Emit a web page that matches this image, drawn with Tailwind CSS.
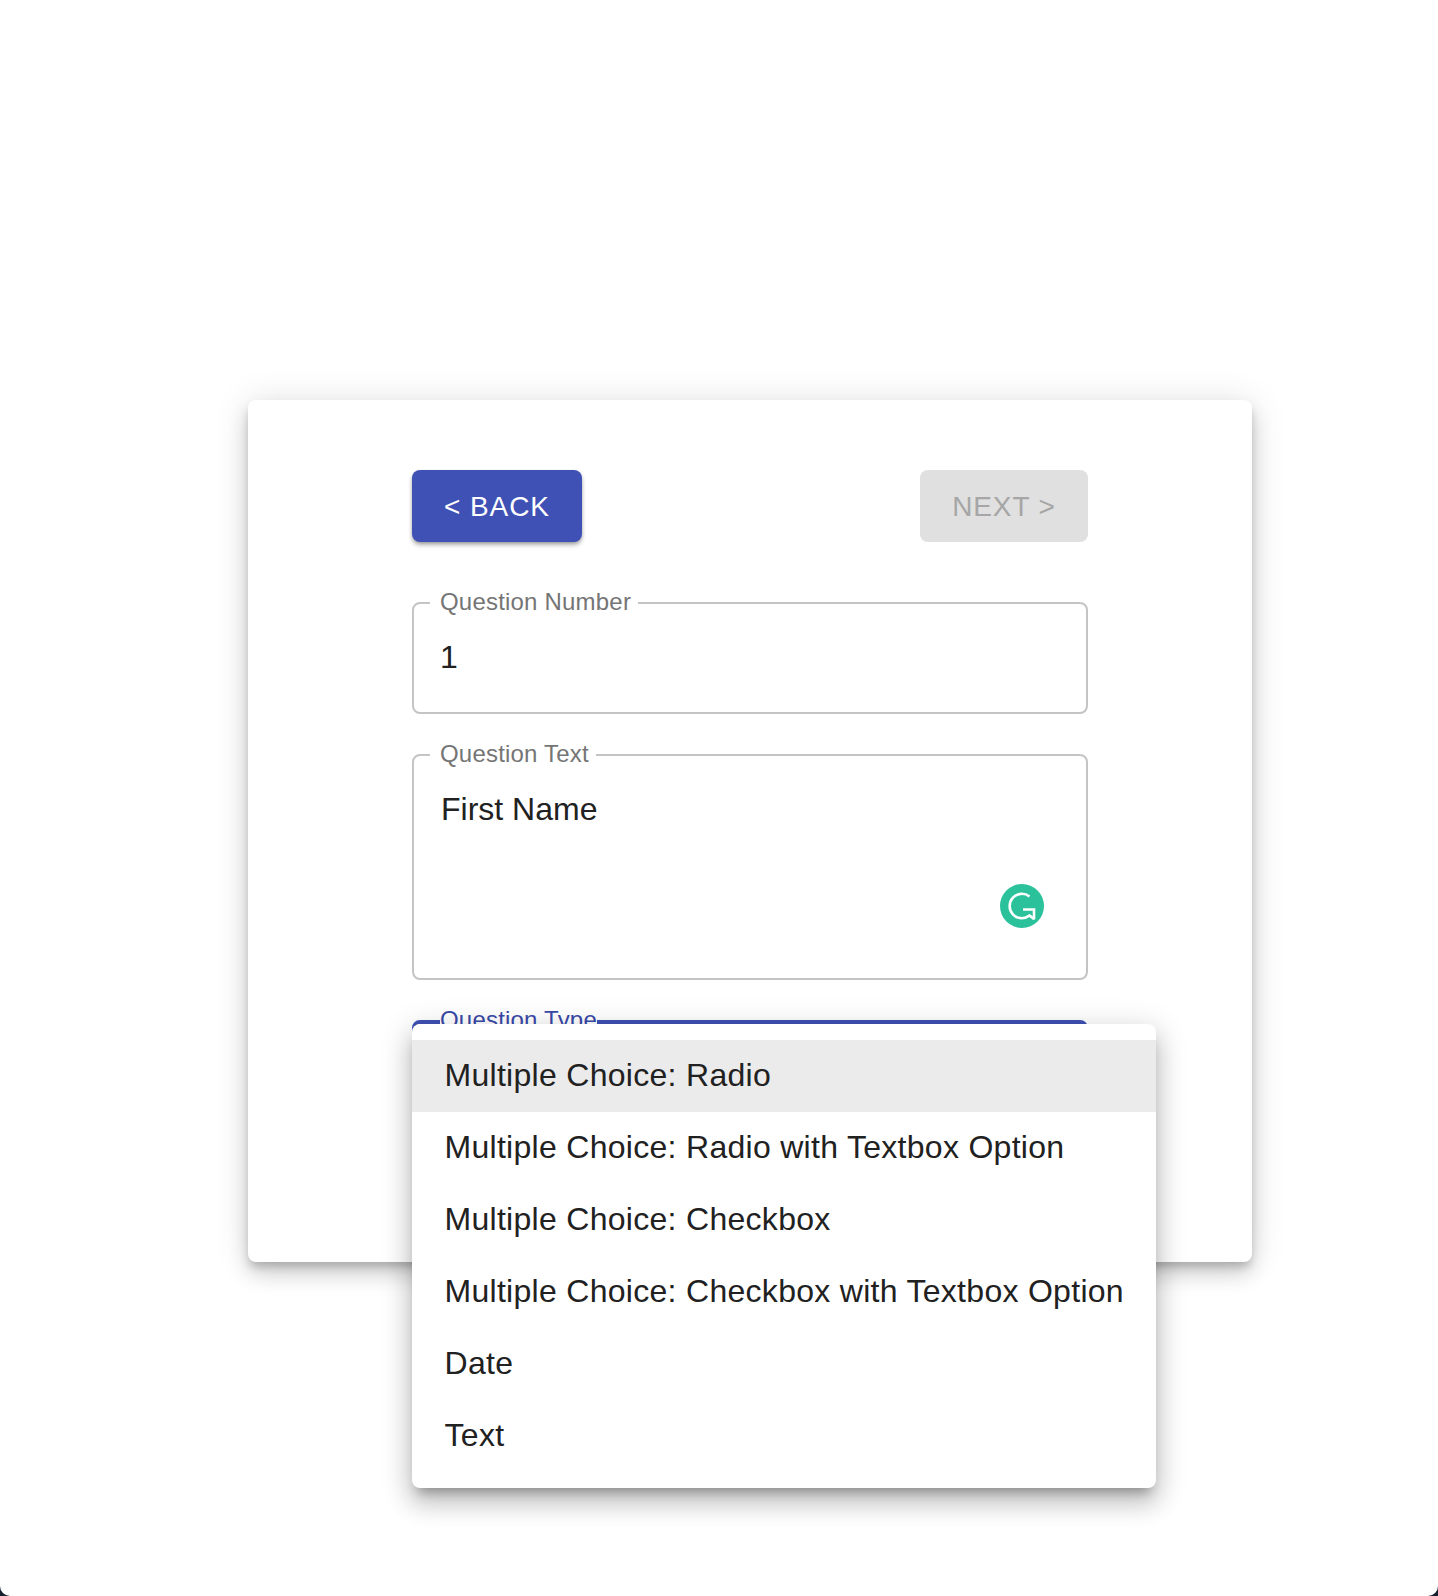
<!DOCTYPE html>
<html lang="en">
<head>
    <meta charset="UTF-8">
    <title>Question Editor</title>
    <script src="https://cdn.jsdelivr.net/npm/@tailwindcss/browser@4"></script>
</head>
<body class="bg-[#16202e] font-['Liberation_Sans',Arial,sans-serif]">
    <div class="relative h-[1596px] w-[1438px] overflow-hidden rounded-b-[10px] bg-white pt-[400px] pl-[248px]">
        <!-- card -->
        <div class="h-[862px] w-[1004px] rounded-lg bg-white px-[164px] pt-[70px] shadow-[0_6px_10px_-2px_rgba(0,0,0,0.2),0_12px_20px_0_rgba(0,0,0,0.14),0_2px_36px_0_rgba(0,0,0,0.12)]">
            <div class="flex justify-between">
                <button class="flex h-[72px] w-[170px] items-center justify-center rounded-lg bg-[#3f51b5] pt-[2px] text-[28px] tracking-[0.9px] text-white shadow-[0_2px_4px_-1px_rgba(0,0,0,0.4),0_4px_5px_0_rgba(0,0,0,0.14)]">&lt; BACK</button>
                <button class="flex h-[72px] w-[168px] items-center justify-center rounded-lg bg-[#e0e0e0] pt-[2px] text-[28px] tracking-[0.9px] text-[#a6a6a6]">NEXT &gt;</button>
            </div>

            <div class="relative mt-[60px] h-[112px] rounded-lg border-2 border-[#c4c4c4] px-[26px] pt-[33px]">
                <label class="absolute -top-[17px] left-[16px] bg-white pr-[7px] pl-[10px] text-2xl leading-[30px] tracking-[0.2px] text-[#757575]">Question Number</label>
                <div class="text-[32px] leading-[40px] text-[#212121]">1</div>
            </div>

            <div class="relative mt-[40px] h-[226px] rounded-lg border-2 border-[#c4c4c4] px-[27px] pt-[33px]">
                <label class="absolute -top-[17px] left-[16px] bg-white pr-[7px] pl-[10px] text-2xl leading-[30px] tracking-[0.2px] text-[#757575]">Question Text</label>
                <div class="text-[32px] leading-[40px] text-[#212121]">First Name</div>
                <svg class="absolute top-[128px] left-[586px]" width="44" height="44" viewBox="0 0 44 44">
                    <circle cx="22" cy="22" r="22" fill="#2bc19b"/>
                    <path d="M29.5 12.5A12.2 12.2 0 1 0 29.5 31.5L34 35" fill="none" stroke="#fff" stroke-width="2.6"/>
                    <path d="M23 25.5H34V35.5" fill="none" stroke="#fff" stroke-width="2.6"/>
                </svg>
            </div>

            <div class="relative mt-[40px] h-[111px] rounded-lg border-4 border-[#3f51b5] px-[27px]">
                <label class="absolute -top-[19px] left-[24px] bg-white text-2xl leading-[30px] tracking-[0.2px] text-[#3949a8]">Question Type</label>
            </div>
        </div>

        <!-- open select menu -->
        <ul class="absolute top-[1024px] left-[412px] w-[744px] rounded-lg bg-white py-4 text-[32px] tracking-[0.29px] text-[#212121] shadow-[0_10px_12px_-6px_rgba(0,0,0,0.3),0_16px_24px_2px_rgba(0,0,0,0.14),0_6px_30px_5px_rgba(0,0,0,0.12)]">
            <li class="flex h-[72px] items-center bg-[#ebebeb] pr-8 pb-[2px] pl-[32.5px]">Multiple Choice: Radio</li>
            <li class="flex h-[72px] items-center pr-8 pb-[2px] pl-[32.5px]">Multiple Choice: Radio with Textbox Option</li>
            <li class="flex h-[72px] items-center pr-8 pb-[2px] pl-[32.5px]">Multiple Choice: Checkbox</li>
            <li class="flex h-[72px] items-center pr-8 pb-[2px] pl-[32.5px]">Multiple Choice: Checkbox with Textbox Option</li>
            <li class="flex h-[72px] items-center pr-8 pb-[2px] pl-[32.5px]">Date</li>
            <li class="flex h-[72px] items-center pr-8 pb-[2px] pl-[32.5px]">Text</li>
        </ul>
    </div>
</body>
</html>
